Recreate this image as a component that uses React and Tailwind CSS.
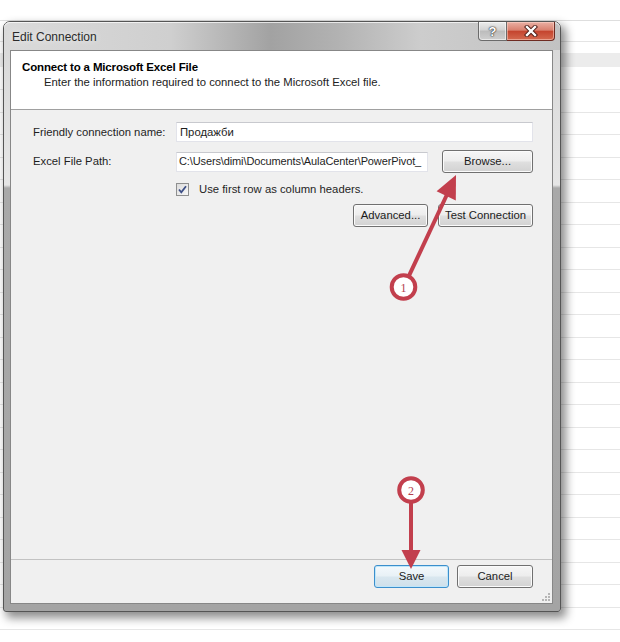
import React from 'react';

const rows = Array.from({ length: 25 });

const Win7Button = ({ children, className = '', primary = false }) => (
  <button
    type="button"
    className={
      'flex items-center justify-center h-[23px] rounded-[3px] border text-[11.3px] text-[#1b1b1b] ' +
      (primary
        ? 'border-[#3c8fcc] bg-[linear-gradient(to_bottom,#f4f9fc_0%,#e8f1f6_48%,#d9e7ef_52%,#cfe0ea_100%)] shadow-[inset_0_0_0_1px_#bfe6fa] '
        : 'border-[#707070] bg-[linear-gradient(to_bottom,#f6f6f6_0%,#ededed_48%,#dfdfdf_52%,#d2d2d2_100%)] shadow-[inset_0_0_0_1px_#fbfbfb] ') +
      className
    }
  >
    {children}
  </button>
);

const Checkbox = () => (
  <div className="w-[13px] h-[13px] border border-[#8e8f8f] bg-[linear-gradient(135deg,#dcdcdc_0%,#f7f7f7_100%)] flex items-center justify-center">
    <svg width="11" height="11" viewBox="0 0 11 11">
      <path d="M2 5.5 L4.3 8.3 L9 2.2" fill="none" stroke="#3d4f86" strokeWidth="1.8" />
    </svg>
  </div>
);

const TitleButtons = () => (
  <div className="flex mr-[5px]">
    <div className="w-[29px] h-[19px] border border-t-0 border-[#6b6b6b] rounded-bl-[4px] bg-[linear-gradient(to_bottom,#ececec_0%,#d2d2d2_45%,#bcbcbc_50%,#cfcfcf_100%)] shadow-[inset_0_0_0_1px_rgba(255,255,255,0.55)] flex items-center justify-center">
      <span className="text-[13px] font-bold text-white leading-none [text-shadow:0_0_1px_#333,0_0_1px_#333,0_0_2px_#444]">?</span>
    </div>
    <div className="w-[48px] h-[19px] border border-t-0 border-l-0 border-[#6e2b22] rounded-br-[4px] bg-[linear-gradient(to_bottom,#eab0a4_0%,#d9806f_45%,#c5452f_52%,#d46a50_100%)] shadow-[inset_0_0_0_1px_rgba(255,220,210,0.5)] flex items-center justify-center">
      <svg width="14" height="12" viewBox="0 0 14 12">
        <path d="M3 2 L11 10 M11 2 L3 10" stroke="#4a1a14" strokeWidth="4.2" strokeLinecap="square" />
        <path d="M3 2 L11 10 M11 2 L3 10" stroke="#ffffff" strokeWidth="2.4" strokeLinecap="square" />
      </svg>
    </div>
  </div>
);

const Annotations = () => (
  <svg className="absolute inset-0 pointer-events-none" width="620" height="642" viewBox="0 0 620 642">
    <g fill="#c23f4d" stroke="#c23f4d">
      <line x1="408.8" y1="276.2" x2="447" y2="194.5" strokeWidth="4" />
      <polygon points="456,175 436.6,191.2 455.8,200.4" stroke="none" />
      <circle cx="403.5" cy="287" r="11.8" fill="#ffffff" strokeWidth="4" />
      <line x1="411" y1="502" x2="411" y2="551" strokeWidth="4" />
      <polygon points="401.5,550 420.5,550 411,569" stroke="none" />
      <circle cx="411" cy="490" r="11.8" fill="#ffffff" strokeWidth="4" />
    </g>
    <text x="403.5" y="291.5" textAnchor="middle" fontFamily="Liberation Serif, serif" fontSize="12" fill="#b3404e">1</text>
    <text x="411" y="494.5" textAnchor="middle" fontFamily="Liberation Serif, serif" fontSize="12" fill="#b3404e">2</text>
  </svg>
);

export default function App() {
  return (
    <div className="relative w-[620px] h-[642px] overflow-hidden bg-white font-['Liberation_Sans',Arial,sans-serif]">
      {/* spreadsheet behind the dialog */}
      <div className="flex flex-col">
        <div className="h-[21px] border-b border-[#dedede]" />
        <div className="h-[21px] border-b border-[#e4e4e4]" />
        <div className="h-[11px]" />
        <div className="h-[14px] bg-[#ececec]" />
        <div className="h-[23px] border-b border-[#e6e6e6]" />
        {rows.map((_, i) => (
          <div key={i} className="h-[22.5px] border-b border-[#e6e6e6]" />
        ))}
      </div>

      {/* dialog */}
      <div className="absolute left-[3px] top-[21px] w-[558px] h-[591px] flex flex-col rounded-t-[7px] rounded-b-[3px] border border-[#555] bg-[linear-gradient(to_bottom,#d6d6d6_0px,#e6e6e6_163px,#a9a9a9_166px,#a4a4a4_100%)] shadow-[4px_5px_10px_1px_rgba(0,0,0,0.45)]">
        <div className="h-[28px] flex items-start justify-between rounded-t-[6px] bg-[linear-gradient(to_right,#dadada_0%,#cfcfcf_30%,#a2a2a2_48%,#b2b2b2_60%,#cdcdcd_75%,#c2c2c2_100%)] shadow-[inset_0_1px_0_rgba(255,255,255,0.7)]">
          <span className="pl-[8px] pt-[8px] text-[12px] leading-[14px] text-[#2b2b2b] [text-shadow:0_0_6px_rgba(255,255,255,0.9)]">
            Edit Connection
          </span>
          <TitleButtons />
        </div>

        <div className="flex-1 flex flex-col ml-[6px] mr-[7px] mb-[7px] border border-[#878787] bg-[#f0f0f0] text-[11.3px] text-[#1e1e1e]">
          <div className="h-[59px] bg-white border-b border-[#a0a0a0] pt-[9px]">
            <div className="pl-[11px] text-[11.5px] leading-[14px] font-bold tracking-[-0.15px] text-black">
              Connect to a Microsoft Excel File
            </div>
            <div className="pl-[33px] mt-[1px] leading-[14px] text-[#222]">
              Enter the information required to connect to the Microsoft Excel file.
            </div>
          </div>

          <div className="pt-[12px] pl-[22px] pr-[19px] flex flex-col">
            <div className="flex items-center h-[20px]">
              <span className="w-[143px]">Friendly connection name:</span>
              <div className="flex-1 h-[20px] bg-white border border-[#e2e3ea] border-t-[#c8c9ce] flex items-center pl-[3px]">
                Продажби
              </div>
            </div>

            <div className="flex items-center h-[23px] mt-[8px]">
              <span className="w-[143px]">Excel File Path:</span>
              <div className="w-[252px] h-[20px] bg-white border border-[#e2e3ea] border-t-[#c8c9ce] flex items-center pl-[2px] whitespace-nowrap text-[11px] tracking-[-0.12px]">
                C:\Users\dimi\Documents\AulaCenter\PowerPivot_
              </div>
              <Win7Button className="ml-[14px] w-[91px]">Browse...</Win7Button>
            </div>

            <div className="flex items-center h-[13px] mt-[10px] pl-[143px]">
              <Checkbox />
              <span className="ml-[10px]">Use first row as column headers.</span>
            </div>

            <div className="flex justify-end mt-[8px]">
              <Win7Button className="w-[75px]">Advanced...</Win7Button>
              <Win7Button className="ml-[10px] w-[95px]">Test Connection</Win7Button>
            </div>
          </div>

          <div className="flex-1" />

          <div className="relative h-[44px] border-t border-[#c2c2c2] flex justify-end items-start pt-[5px] pr-[19px] gap-[8px]">
            <Win7Button primary className="w-[75px]">Save</Win7Button>
            <Win7Button className="w-[76px]">Cancel</Win7Button>
            <svg className="absolute right-[1px] bottom-[1px]" width="10" height="10" viewBox="0 0 10 10">
              <g fill="#b5b5b5">
                <rect x="7" y="1" width="2" height="2" />
                <rect x="4" y="4" width="2" height="2" />
                <rect x="7" y="4" width="2" height="2" />
                <rect x="1" y="7" width="2" height="2" />
                <rect x="4" y="7" width="2" height="2" />
                <rect x="7" y="7" width="2" height="2" />
              </g>
            </svg>
          </div>
        </div>
      </div>

      <Annotations />
    </div>
  );
}
